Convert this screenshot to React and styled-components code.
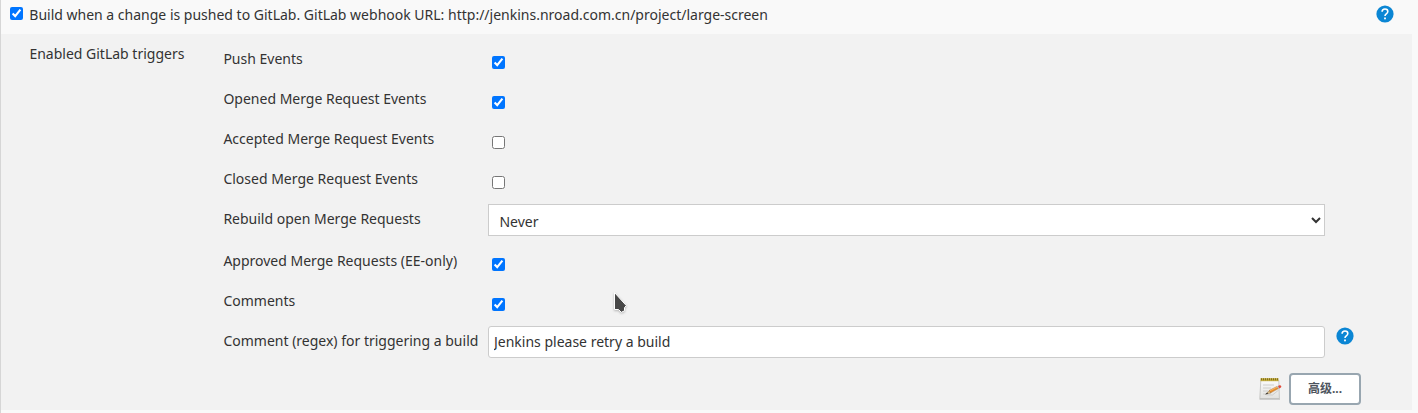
import React from "react";
import styled, { createGlobalStyle } from "styled-components";

const GlobalStyle = createGlobalStyle`
  *, *::before, *::after { box-sizing: border-box; }
  body { margin: 0; background: #f9f9f9; }
`;

const Page = styled.main`
  width: 1418px;
  height: 413px;
  overflow: hidden;
  padding-right: 6px;
  border-left: 1px solid #d6d6d6;
  background: #f9f9f9;
  color: #333;
  font: 14px/20px "Noto Sans", "Noto Sans CJK SC", sans-serif;
`;

const Header = styled.header`
  display: flex;
  align-items: flex-start;
  height: 34px;
  padding: 5px 18px 0 9px;
`;

const HeaderLabel = styled.label`
  display: flex;
  flex: 1;
  gap: 6.3px;
  white-space: nowrap;
`;

const Checkbox = styled.input.attrs({ type: "checkbox" })`
  flex: none;
  width: 13px;
  height: 13px;
  margin: ${(p) => p.$margin || "0"};
`;

const Panel = styled.section`
  display: flex;
  height: 376px;
  padding: 5px 0 0 28.4px;
  background: #f2f2f2;
`;

const GroupTitle = styled.div`
  width: 194px;
  padding-top: 5px;
`;

const Fields = styled.div`
  flex: 1;
`;

const Row = styled.div`
  display: flex;
  align-items: flex-start;
  height: ${(p) => (p.$tall ? 42 : 40)}px;
`;

const Label = styled.label`
  width: 264.6px;
  padding-top: 10px;
  white-space: nowrap;
`;

const Select = styled.select`
  width: 837px;
  height: 32px;
  margin: 5px 0 0;
  padding: 3px 0 0 6.4px;
  border: 1px solid #ccc;
  border-radius: 0;
  background: #fff;
  color: #333;
  font: inherit;
`;

const TextInput = styled.input`
  width: 837px;
  height: 32px;
  margin: 5px 11px 0 0;
  padding: 0 5px 2px;
  border: 1px solid #ccc;
  border-radius: 3px;
  background: #fff;
  color: #333;
  font: inherit;
`;

const HelpIcon = styled.svg`
  display: block;
  flex: none;
  width: 18px;
  height: 18px;
  margin-top: ${(p) => p.$top || 0}px;
`;

const Actions = styled.div`
  display: flex;
  justify-content: flex-end;
  gap: 7px;
  padding: 10px 51px 0 0;
`;

const NotepadIcon = styled.svg`
  width: 24px;
  height: 24px;
  margin-top: 4px;
`;

const Button = styled.button`
  width: 72px;
  height: 32px;
  padding: 0;
  border: 2px solid #98a6b0;
  border-radius: 4px;
  background: #fff;
  color: #4d545d;
  font: bold 12px/18px "Noto Sans", "Noto Sans CJK SC", sans-serif;
`;

const Pointer = styled.svg`
  position: absolute;
  left: 610px;
  top: 288px;
  width: 20px;
  height: 28px;
  pointer-events: none;
  filter: drop-shadow(0 1px 1px rgba(0, 0, 0, 0.25));
`;

const Help = ({ top }) => (
  <HelpIcon $top={top} viewBox="0 0 18 18" aria-label="Help">
    <circle cx="9" cy="9" r="8.6" fill="#0b86d4" />
    <path
      d="M6.1 6.8c0-1.8 1.1-2.8 2.9-2.8s2.8 1 2.8 2.5c0 1.2-.7 1.8-1.5 2.4-.8.6-1.3 1-1.3 2.2"
      fill="none"
      stroke="#fff"
      strokeWidth="1.6"
    />
    <rect x="8.1" y="12.5" width="1.8" height="1.8" fill="#fff" />
  </HelpIcon>
);

const Notepad = () => (
  <NotepadIcon viewBox="0 0 24 24" aria-hidden="true">
    <defs>
      <linearGradient id="paper" x1="0" y1="0" x2="0" y2="1">
        <stop offset="0" stopColor="#fafafa" />
        <stop offset="1" stopColor="#e2e2e0" />
      </linearGradient>
    </defs>
    <path d="M1.5 21.5h20.5v1.2H1.5z" fill="#999" opacity=".6" />
    <path d="M2.8 3.5h18l.6 18H1.8z" fill="url(#paper)" stroke="#b8b8b4" strokeWidth=".7" />
    <path d="M2.5 1.2h18v3h-18z" fill="#c3ad3f" />
    <path d="M3 2.2h17.5" stroke="#82701d" strokeWidth="2" strokeDasharray="1 1" />
    <path d="M5 8h11M5 11h8M5 14h5M5 17h3" stroke="#cececc" strokeWidth="1" />
    <path d="M8.5 17.8l6 .2 6-4.8" stroke="#999" strokeWidth="1" fill="none" opacity=".35" />
    <path d="M7.8 17l3.7-3.5 1.5 2.4z" fill="#dfc28e" stroke="#75562d" strokeWidth=".4" />
    <path d="M7.2 17.4l2-2 .9 1.3z" fill="#333" />
    <path d="M11.2 13.4l7.9-4 1.4 2.2-7.8 4.2z" fill="#e88e2c" stroke="#a0682b" strokeWidth=".4" />
    <path d="M12 13.7l7.3-3.7" stroke="#ffc57a" strokeWidth=".7" />
    <path d="M18.8 9.5l1.5-.7 1.4 2.2-1.4.8z" fill="#bdc1c4" />
    <path d="M20 8.9l1.5-.6c1.5-.3 2.4 1.4 1.4 2.2l-1.6.9z" fill="#e14938" />
  </NotepadIcon>
);

const CheckRow = ({ label, checked }) => (
  <Row>
    <Label>{label}</Label>
    <Checkbox $margin="17px 0 0 4px" defaultChecked={checked} aria-label={label} />
  </Row>
);

const events = [
  ["Push Events", true],
  ["Opened Merge Request Events", true],
  ["Accepted Merge Request Events", false],
  ["Closed Merge Request Events", false],
];

export default function App() {
  return (
    <Page>
      <GlobalStyle />
      <Header>
        <HeaderLabel>
          <Checkbox $margin="2px 0 0" defaultChecked />
          Build when a change is pushed to GitLab. GitLab webhook URL: http://jenkins.nroad.com.cn/project/large-screen
        </HeaderLabel>
        <Help />
      </Header>
      <Panel>
        <GroupTitle>Enabled GitLab triggers</GroupTitle>
        <Fields>
          {events.map(([label, checked]) => (
            <CheckRow key={label} label={label} checked={checked} />
          ))}
          <Row $tall>
            <Label htmlFor="rebuild">Rebuild open Merge Requests</Label>
            <Select id="rebuild" defaultValue="never">
              <option value="never">Never</option>
            </Select>
          </Row>
          <CheckRow label="Approved Merge Requests (EE-only)" checked />
          <CheckRow label="Comments" checked />
          <Row $tall>
            <Label htmlFor="comment">Comment (regex) for triggering a build</Label>
            <TextInput id="comment" defaultValue="Jenkins please retry a build" />
            <Help top={6} />
          </Row>
          <Actions>
            <Notepad />
            <Button type="button">高级...</Button>
          </Actions>
        </Fields>
      </Panel>
      <Pointer viewBox="0 0 20 28" aria-hidden="true">
        <path d="M4.5 4.5v17h4l2.8 2.8 3.2-1.5v-3.2l1.8-2z" fill="#484848" stroke="#fff" strokeWidth="1" />
      </Pointer>
    </Page>
  );
}
